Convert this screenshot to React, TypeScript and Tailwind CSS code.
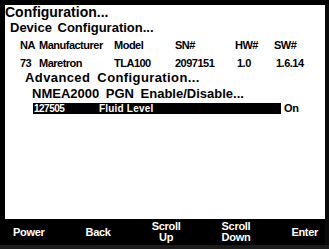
import React from "react";

const f = { fontFamily: '"Liberation Sans", Arial, sans-serif' };

export default function App() {
  return (
    <div style={f} className="w-[329px] h-[249px] bg-black overflow-hidden flex flex-col">
      <div className="pt-[5px] pl-[5px] flex">
        <div className="w-[320px] h-[240px] flex flex-col">
          <div className="h-[214px] bg-white text-black font-bold flex flex-col">
            <div className="h-[15px] text-[14px] leading-[14px] pl-[0px]">Configuration...</div>
            <div className="h-[16px] text-[13px] leading-[16px] pl-[5px] [word-spacing:2px]">Device Configuration...</div>
            <div className="mt-[2px] h-[14px] text-[11px] leading-[14px] pl-[15px] tracking-[-0.5px] grid grid-cols-[19px_75px_61px_60px_39px_1fr]">
              <span>NA</span><span>Manufacturer</span><span>Model</span><span>SN#</span><span>HW#</span><span>SW#</span>
            </div>
            <div className="mt-[4px] h-[14px] text-[11px] leading-[14px] pl-[15px] tracking-[-0.5px] grid grid-cols-[19px_75px_61px_60px_39px_1fr]">
              <span>73</span><span>Maretron</span><span>TLA100</span><span>2097151</span><span className="pl-[2px]">1.0</span><span className="pl-[2px]">1.6.14</span>
            </div>
            <div className="h-[16px] text-[13px] leading-[16px] pl-[20px] tracking-[0.4px] [word-spacing:3px]">Advanced Configuration...</div>
            <div className="h-[16px] text-[13px] leading-[16px] pl-[27px] [word-spacing:3px]">NMEA2000 PGN Enable/Disable...</div>
            <div className="mt-[1px] h-[11px] text-[10px] leading-[11px] pl-[28px] flex">
              <div className="w-[248px] bg-black text-white flex">
                <span className="w-[66px] pl-[1px] tracking-[-0.5px]">127505</span>
                <span className="tracking-[0.2px]">Fluid Level</span>
              </div>
              <span className="pl-[3px] text-[11px] tracking-[-0.3px]">On</span>
            </div>
          </div>
          <div className="h-[26px] bg-black text-white font-bold text-[11px] leading-[11px] tracking-[-0.3px] flex items-center justify-between pl-[8px] pr-[7px]">
            <span>Power</span>
            <span>Back</span>
            <span className="text-center">Scroll<br />Up</span>
            <span className="text-center">Scroll<br />Down</span>
            <span>Enter</span>
          </div>
        </div>
        <div className="w-[4px] bg-[#0a0a0a]" />
      </div>
      <div className="flex-1 bg-[#1c1c1c]" />
    </div>
  );
}
